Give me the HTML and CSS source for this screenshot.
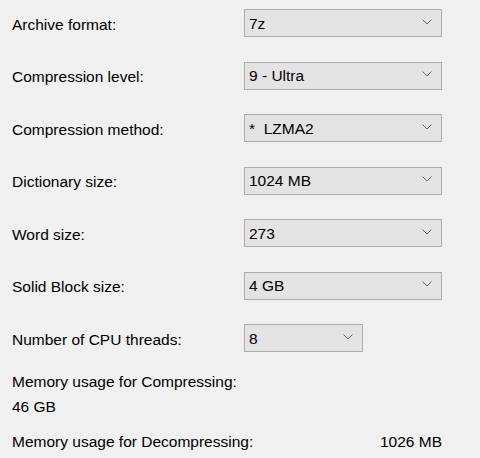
FILE: index.html
```html
<!DOCTYPE html>
<html>
<head>
<meta charset="utf-8">
<link rel="stylesheet" href="styles.css">
</head>
<body>
<div class="panel">
  <div class="row">
    <span class="label">Archive format:</span>
    <div class="combo"><span class="value">7z</span><svg class="chev" width="10" height="6" viewBox="0 0 10 6"><path d="M0.5 0.5 L5 5 L9.5 0.5"/></svg></div>
  </div>
  <div class="row">
    <span class="label">Compression level:</span>
    <div class="combo"><span class="value">9 - Ultra</span><svg class="chev" width="10" height="6" viewBox="0 0 10 6"><path d="M0.5 0.5 L5 5 L9.5 0.5"/></svg></div>
  </div>
  <div class="row">
    <span class="label">Compression method:</span>
    <div class="combo"><span class="value">*&nbsp; LZMA2</span><svg class="chev" width="10" height="6" viewBox="0 0 10 6"><path d="M0.5 0.5 L5 5 L9.5 0.5"/></svg></div>
  </div>
  <div class="row">
    <span class="label">Dictionary size:</span>
    <div class="combo"><span class="value">1024 MB</span><svg class="chev" width="10" height="6" viewBox="0 0 10 6"><path d="M0.5 0.5 L5 5 L9.5 0.5"/></svg></div>
  </div>
  <div class="row">
    <span class="label">Word size:</span>
    <div class="combo"><span class="value">273</span><svg class="chev" width="10" height="6" viewBox="0 0 10 6"><path d="M0.5 0.5 L5 5 L9.5 0.5"/></svg></div>
  </div>
  <div class="row">
    <span class="label">Solid Block size:</span>
    <div class="combo"><span class="value">4 GB</span><svg class="chev" width="10" height="6" viewBox="0 0 10 6"><path d="M0.5 0.5 L5 5 L9.5 0.5"/></svg></div>
  </div>
  <div class="row row-small">
    <span class="label">Number of CPU threads:</span>
    <div class="combo"><span class="value">8</span><svg class="chev" width="10" height="6" viewBox="0 0 10 6"><path d="M0.5 0.5 L5 5 L9.5 0.5"/></svg></div>
  </div>
  <div class="memory">
    <div class="mem-line">Memory usage for Compressing:</div>
    <div class="mem-line">46 GB</div>
    <div class="mem-line mem-row"><span>Memory usage for Decompressing:</span><span>1026 MB</span></div>
  </div>
</div>
</body>
</html>
```

FILE: styles.css
```css
html, body {
  margin: 0;
  padding: 0;
  background: #f0f0f0;
}
body {
  font-family: "Liberation Sans", Arial, sans-serif;
  font-size: 15.5px;
  color: #000;
}
.panel {
  width: 430px;
  padding: 9px 0 0 12px;
  display: flex;
  flex-direction: column;
  gap: 24.5px;
}
.row {
  display: grid;
  grid-template-columns: 232px 198px;
  height: 28px;
  align-items: center;
}
.row-small {
  grid-template-columns: 232px 119px;
}
.label {
  line-height: 25px;
  padding-top: 2px;
}
.combo {
  box-sizing: border-box;
  height: 28px;
  border: 1px solid #adadad;
  background: #e3e3e3;
  display: flex;
  align-items: center;
  justify-content: space-between;
  padding: 0 9px 0 4px;
}
.value {
  line-height: 20px;
  padding-top: 1px;
}
.chev {
  display: block;
  margin-bottom: 3px;
}
.chev path {
  fill: none;
  stroke: #666;
  stroke-width: 1;
}
.memory {
  margin-top: -7.5px;
  display: flex;
  flex-direction: column;
}
.mem-line {
  line-height: 25px;
}
.mem-row {
  margin-top: 10px;
  display: flex;
  justify-content: space-between;
}
```
